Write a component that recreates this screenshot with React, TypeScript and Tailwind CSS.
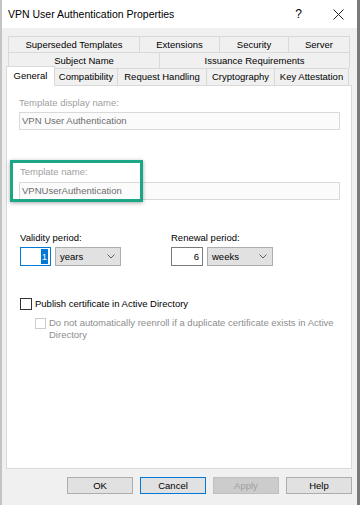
const row1 = [
  { label: "Superseded Templates", w: "w-[132px]" },
  { label: "Extensions", w: "w-[80px]" },
  { label: "Security", w: "w-[69px]" },
  { label: "Server", w: "w-[61px]" },
];
const row2 = [
  { label: "Subject Name", w: "w-[152px]" },
  { label: "Issuance Requirements", w: "w-[190px]" },
];
const row3 = [
  { label: "Compatibility", w: "w-[63px]" },
  { label: "Request Handling", w: "w-[89px]" },
  { label: "Cryptography", w: "w-[68px]" },
  { label: "Key Attestation", w: "w-[74px]" },
];

function Chevron() {
  return (
    <svg width="8" height="5" viewBox="0 0 8 5" className="ml-auto mr-[3px]">
      <polyline points="0.5,0.5 4,4 7.5,0.5" fill="none" stroke="#606060" strokeWidth="1" />
    </svg>
  );
}

function Combo({ value }: { value: string }) {
  return (
    <div className="flex h-[19px] w-[66px] items-center border border-[#adadad] bg-[#e1e1e1] pl-[4px] pr-[2px] text-black">
      <span>{value}</span>
      <Chevron />
    </div>
  );
}

function Btn({ label, variant }: { label: string; variant?: "focus" | "disabled" }) {
  const cls =
    variant === "disabled"
      ? "border-[#bfbfbf] bg-[#cccccc] text-[#a0a0a0]"
      : variant === "focus"
        ? "border-[#0078d7] bg-[#e1e1e1] text-black"
        : "border-[#adadad] bg-[#e1e1e1] text-black";
  return (
    <div className={`flex h-[17px] w-[66px] items-center justify-center border ${cls}`}>{label}</div>
  );
}

export default function App() {
  return (
    <div className="flex h-[505px] w-[360px] flex-col overflow-hidden border-l-2 border-r-[3px] border-l-[#c4c4c4] border-r-[#7a7a7a] bg-[#f0f0f0] font-['Liberation_Sans',Arial,sans-serif] text-[9.5px] leading-[12px] text-black">
      {/* title bar */}
      <div className="flex h-[28px] shrink-0 items-center bg-white pl-[6px]">
        <span className="text-[10.5px]">VPN User Authentication Properties</span>
        <div className="flex-1" />
        <span className="mr-[31px] text-[12px]">?</span>
        <svg width="11" height="11" viewBox="0 0 11 11" className="mr-[13px]">
          <path d="M0.5 0.5 L10.5 10.5 M10.5 0.5 L0.5 10.5" stroke="#222" strokeWidth="1" fill="none" />
        </svg>
      </div>

      {/* tabs */}
      <div className="mt-[8px] flex flex-col">
        <div className="ml-[6px] flex h-[16px]">
          {row1.map((t, i) => (
            <div
              key={t.label}
              className={`${t.w} flex items-center justify-center border-t border-r border-[#d9d9d9] ${i === 0 ? "border-l" : ""}`}
            >
              {t.label}
            </div>
          ))}
        </div>
        <div className="ml-[6px] flex h-[16px]">
          {row2.map((t, i) => (
            <div
              key={t.label}
              className={`${t.w} flex items-center justify-center border-t border-r border-[#d9d9d9] ${i === 0 ? "border-l" : ""}`}
            >
              {t.label}
            </div>
          ))}
        </div>
        <div className="ml-[4px] flex h-[17px] items-end">
          <div className="relative z-10 -mb-px flex h-[20px] w-[49px] items-center justify-center border border-b-0 border-[#d9d9d9] bg-white pb-[2px]">
            General
          </div>
          {row3.map((t) => (
            <div
              key={t.label}
              className={`${t.w} flex h-[17px] items-center justify-center border-t border-r border-[#d9d9d9]`}
            >
              {t.label}
            </div>
          ))}
        </div>
      </div>

      {/* page */}
      <div className="relative ml-[4px] h-[384px] w-[346px] shrink-0 border border-[#d9d9d9] bg-white pl-[12px]">
        <div className="mt-[11px] text-[#a0a0a0]">Template display name:</div>
        <div className="mt-[3px] flex h-[18px] w-[321px] items-center border border-[#d9d9d9] bg-[#fbfbfb] pl-[2px] text-[#6d6d6d]">
          VPN User Authentication
        </div>

        <div className="mt-[36px] pl-[1px] text-[#a0a0a0]">Template name:</div>
        <div className="mt-[4px] flex h-[18px] w-[321px] items-center border border-[#d9d9d9] bg-[#fbfbfb] pl-[2px] text-[#6d6d6d]">
          VPNUserAuthentication
        </div>

        <div className="mt-[32px] flex pl-[1px]">
          <div className="w-[151px]">
            <div>Validity period:</div>
            <div className="mt-[3px] flex gap-[4px]">
              <div className="flex h-[19px] w-[31px] items-center justify-end border border-[#0078d7] bg-white pr-[2px]">
                <span className="bg-[#0078d7] px-[1px] leading-[15px] text-white">1</span>
              </div>
              <Combo value="years" />
            </div>
          </div>
          <div>
            <div>Renewal period:</div>
            <div className="mt-[3px] flex gap-[4px]">
              <div className="flex h-[19px] w-[32px] items-center justify-end border border-[#7a7a7a] bg-white pr-[3px]">
                6
              </div>
              <Combo value="weeks" />
            </div>
          </div>
        </div>

        <div className="mt-[32px] flex items-center pl-[1px]">
          <div className="h-[12px] w-[12px] border border-[#333333] bg-white" />
          <span className="ml-[3px]">Publish certificate in Active Directory</span>
        </div>
        <div className="mt-[7px] flex items-start pl-[16px] text-[#8d8d8d]">
          <div className="mt-[1px] h-[11px] w-[11px] shrink-0 border border-[#cccccc] bg-white" />
          <span className="ml-[3px] w-[290px]">
            Do not automatically reenroll if a duplicate certificate exists in Active Directory
          </span>
        </div>

        {/* annotation highlight */}
        <div className="absolute left-[3px] top-[74px] h-[42px] w-[133px] border-[3px] border-[#1ba786] shadow-[0_1px_4px_rgba(0,0,0,0.35)]" />
      </div>

      {/* buttons */}
      <div className="mt-[8px] flex justify-end gap-[7px] pr-[5px]">
        <Btn label="OK" />
        <Btn label="Cancel" variant="focus" />
        <Btn label="Apply" variant="disabled" />
        <Btn label="Help" />
      </div>
    </div>
  );
}
